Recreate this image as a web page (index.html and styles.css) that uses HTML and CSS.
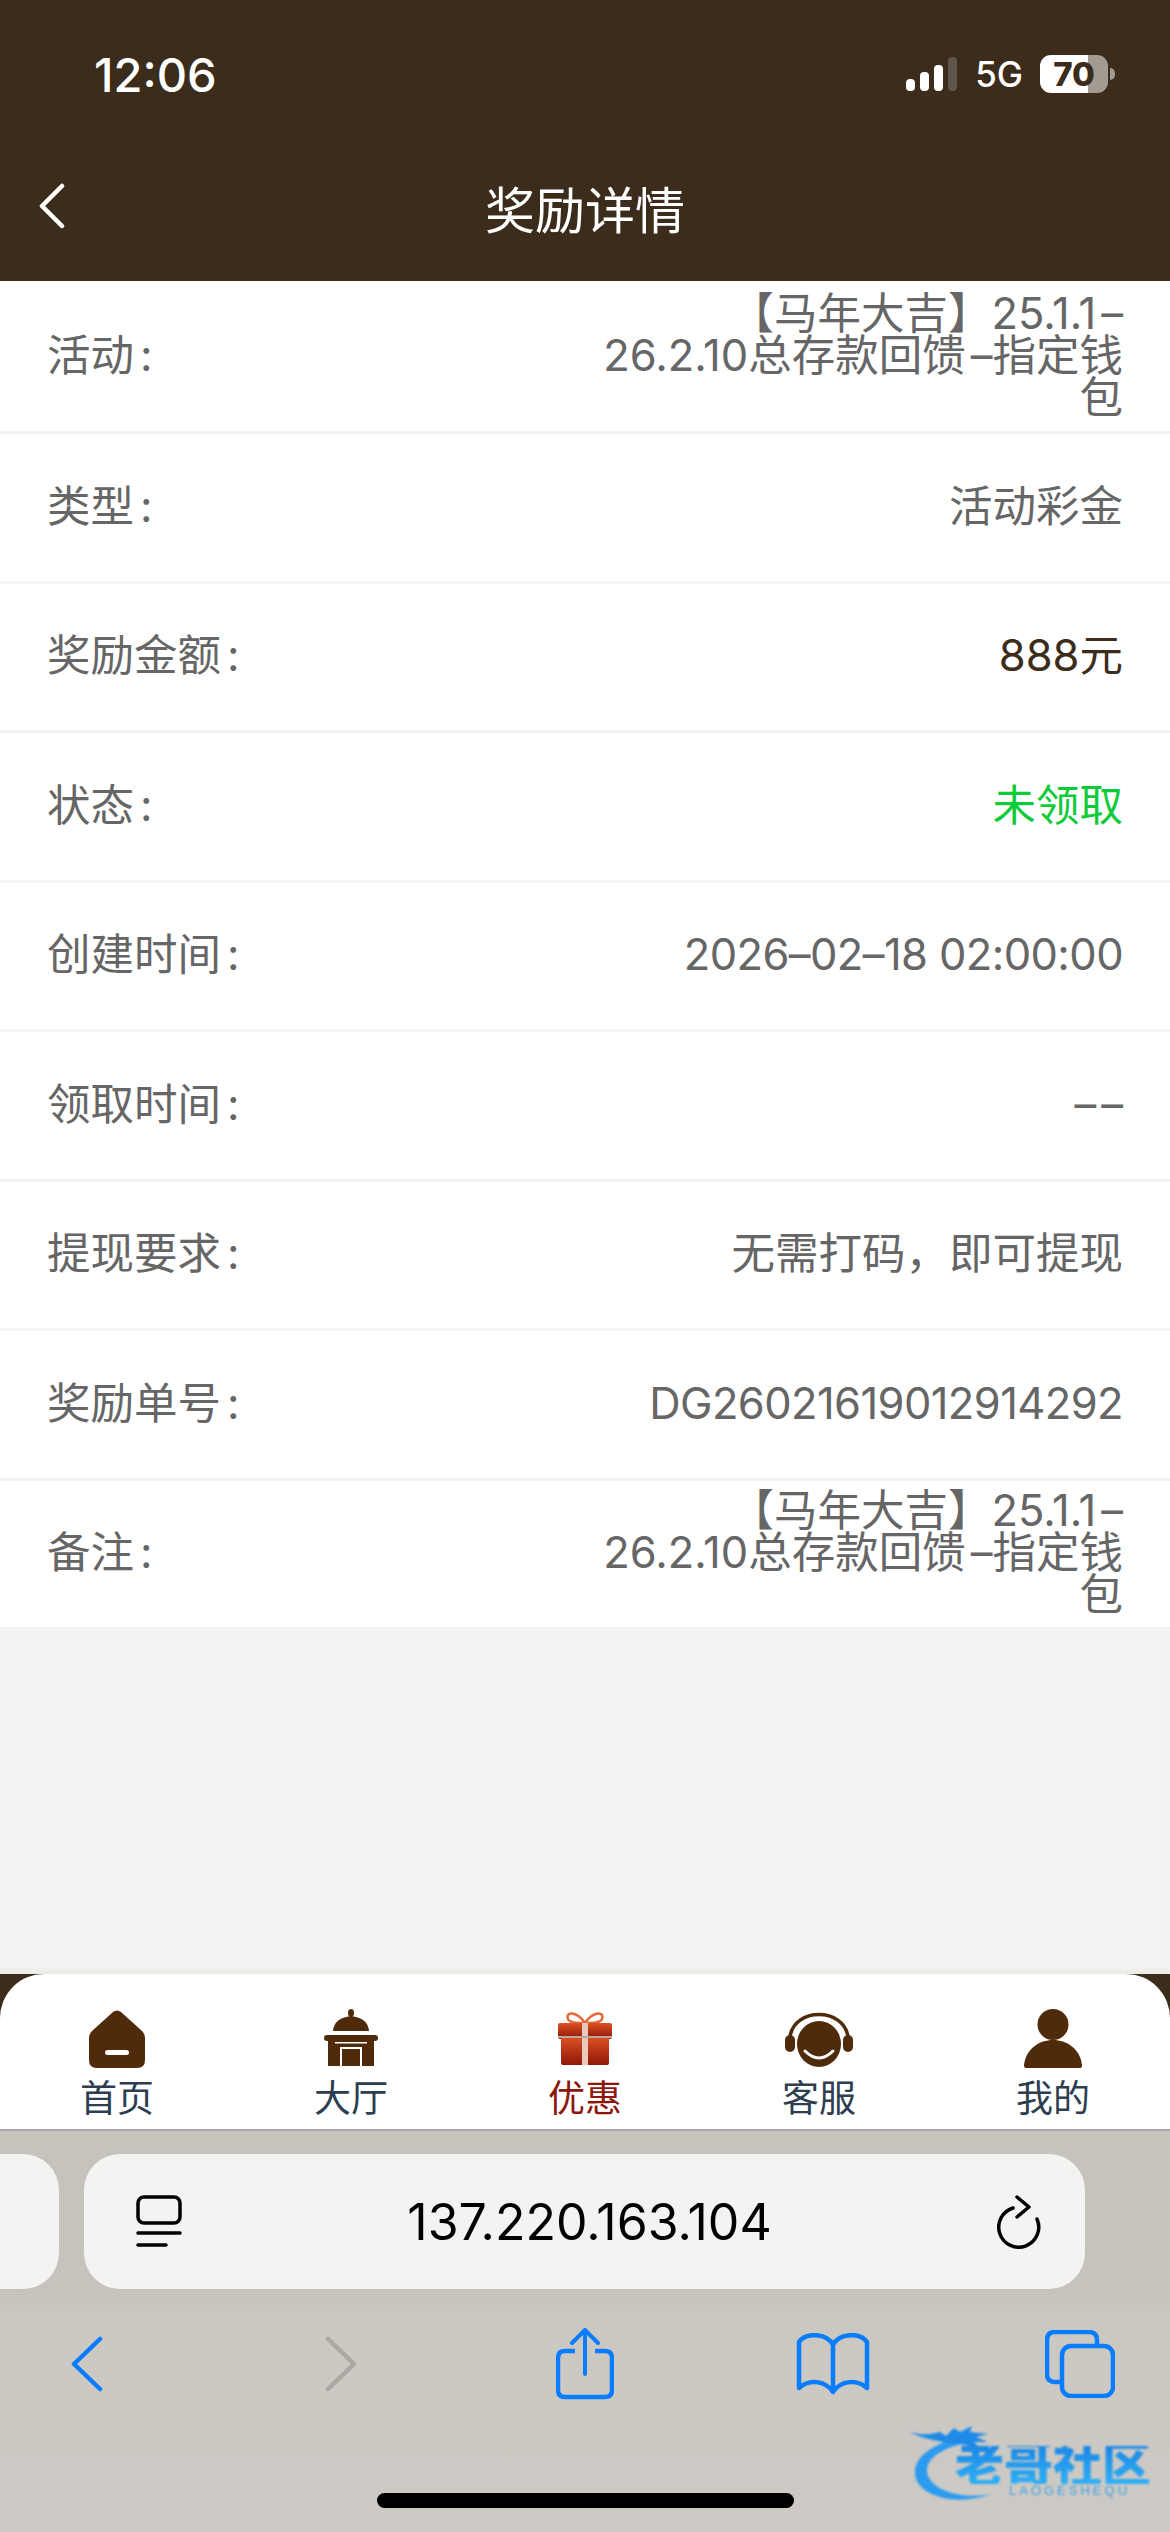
FILE: index.html
```html
<!DOCTYPE html>
<html>

<head>
    <meta http-equiv="Content-Type" content="text/html; charset=utf-8" />
    <title>奖励详情</title>
    <link rel="stylesheet" href="styles.css">
</head>

<body>
    <div id="page">
        <div id="header">
            <div id="statusBar">
                <span id="time">12:06</span>
                <div id="statusIcons">
                    <svg class="signal" width="52" height="34" viewBox="0 0 52 34">
                        <rect x="0" y="22" width="9" height="12" rx="4" fill="#fff" />
                        <rect x="14" y="15" width="9" height="19" rx="4" fill="#fff" />
                        <rect x="28" y="8" width="9" height="26" rx="4" fill="#fff" />
                        <rect x="42" y="0" width="9" height="34" rx="4" fill="#5f5549" />
                    </svg>
                    <span id="network">5G</span>
                    <span id="battery">70</span>
                    <span id="batteryNub"></span>
                </div>
            </div>
            <div id="titleBar">
                <svg class="backIcon" width="30" height="46" viewBox="0 0 30 46">
                    <path d="M25 3 L5 23 L25 43" fill="none" stroke="#fff" stroke-width="4.5" stroke-linecap="round" stroke-linejoin="round" />
                </svg>
                <h1 id="title">奖励详情</h1>
            </div>
        </div>

        <div id="main">
            <div class="row">
                <span class="label">活动<span class="colon">:</span></span>
                <span class="value">【马年大吉】25.1.1<span class="dash">–</span><br>26.2.10总存款回馈<span class="dash">–</span>指定钱<br>包</span>
            </div>
            <div class="row">
                <span class="label">类型<span class="colon">:</span></span>
                <span class="value">活动彩金</span>
            </div>
            <div class="row">
                <span class="label">奖励金额<span class="colon">:</span></span>
                <span class="value dark">888元</span>
            </div>
            <div class="row">
                <span class="label">状态<span class="colon">:</span></span>
                <span class="value green">未领取</span>
            </div>
            <div class="row">
                <span class="label">创建时间<span class="colon">:</span></span>
                <span class="value num">2026–02–18 02:00:00</span>
            </div>
            <div class="row">
                <span class="label">领取时间<span class="colon">:</span></span>
                <span class="value"><span class="dash">–</span><span class="dash">–</span></span>
            </div>
            <div class="row">
                <span class="label">提现要求<span class="colon">:</span></span>
                <span class="value">无需打码&#65292;即可提现</span>
            </div>
            <div class="row">
                <span class="label">奖励单号<span class="colon">:</span></span>
                <span class="value num">DG26021619012914292</span>
            </div>
            <div class="row">
                <span class="label">备注<span class="colon">:</span></span>
                <span class="value">【马年大吉】25.1.1<span class="dash">–</span><br>26.2.10总存款回馈<span class="dash">–</span>指定钱<br>包</span>
            </div>
        </div>

        <div id="navWrap">
            <div id="nav">
                <div class="navItem">
                    <svg width="60" height="60" viewBox="0 0 60 60">
                        <path d="M26 3 Q30 0 34 3 L55 22 Q58 25 58 29 L58 51 Q58 59 50 59 L10 59 Q2 59 2 51 L2 29 Q2 25 5 22 Z" fill="#4f2b0b" />
                        <rect x="18" y="41" width="24" height="5" rx="2.5" fill="#fff" />
                    </svg>
                    <span>首页</span>
                </div>
                <div class="navItem">
                    <svg width="60" height="60" viewBox="0 0 60 60">
                        <ellipse cx="30" cy="4" rx="3" ry="4" fill="#4f2b0b" />
                        <path d="M12 22 Q13 9 30 7 Q47 9 48 22 Z" fill="#4f2b0b" />
                        <rect x="3" y="26" width="54" height="6" rx="3" fill="#4f2b0b" />
                        <rect x="7" y="30" width="46" height="27" fill="#4f2b0b" />
                        <rect x="14" y="33" width="32" height="1.5" fill="#fff" />
                        <path d="M20 57 L20 39 L40 39 L40 57" fill="none" stroke="#fff" stroke-width="2" />
                    </svg>
                    <span>大厅</span>
                </div>
                <div class="navItem active">
                    <svg width="60" height="60" viewBox="0 0 60 60">
                        <defs>
                            <linearGradient id="giftGrad" x1="0" y1="0" x2="0" y2="1">
                                <stop offset="0" stop-color="#dc5222" />
                                <stop offset="1" stop-color="#8f1608" />
                            </linearGradient>
                        </defs>
                        <path d="M30 14 C22 2 10 2 13 10 C14 14 22 14 30 14 C38 14 46 14 47 10 C50 2 38 2 30 14 Z" fill="none" stroke="#e8683a" stroke-width="2.5" />
                        <rect x="3" y="14" width="54" height="16" rx="2" fill="url(#giftGrad)" />
                        <rect x="6" y="28" width="48" height="28" rx="2" fill="url(#giftGrad)" />
                        <rect x="27" y="14" width="6" height="42" fill="#e9c9bb" />
                        <rect x="3" y="27" width="54" height="2" fill="#b9a8a0" />
                    </svg>
                    <span>优惠</span>
                </div>
                <div class="navItem">
                    <svg width="70" height="60" viewBox="0 0 70 60">
                        <path d="M6 28 C10 -2 60 -2 64 28" fill="none" stroke="#4f2b0b" stroke-width="3.5" />
                        <rect x="1" y="26" width="10" height="17" rx="5" fill="#4f2b0b" />
                        <rect x="59" y="26" width="10" height="17" rx="5" fill="#4f2b0b" />
                        <ellipse cx="35" cy="35" rx="22" ry="23" fill="#4f2b0b" />
                        <path d="M21 42 Q35 56 49 42" fill="none" stroke="#fff" stroke-width="3" stroke-linecap="round" />
                    </svg>
                    <span>客服</span>
                </div>
                <div class="navItem">
                    <svg width="60" height="60" viewBox="0 0 62 62">
                        <ellipse cx="31" cy="16" rx="16" ry="16" fill="#4f2b0b" />
                        <path d="M1 58 C3 41 17 32 31 32 C45 32 59 41 61 58 Q61 61 58 61 L4 61 Q1 61 1 58 Z" fill="#4f2b0b" />
                    </svg>
                    <span>我的</span>
                </div>
            </div>
        </div>

        <div id="toolbar">
            <div id="urlRow">
                <div id="prevTab"></div>
                <div id="urlBar">
                    <svg width="46" height="54" viewBox="0 0 46 54">
                        <rect x="2" y="2" width="42" height="26" rx="6" fill="none" stroke="#000" stroke-width="3.5" />
                        <path d="M2 38 L44 38 M2 50 L30 50" fill="none" stroke="#000" stroke-width="3.5" stroke-linecap="round" />
                    </svg>
                    <span id="url">137.220.163.104</span>
                    <svg width="46" height="54" viewBox="0 0 46 54">
                        <path d="M16 13 A20 20 0 1 0 40 24" fill="none" stroke="#000" stroke-width="3.5" stroke-linecap="round" />
                        <path d="M20 2 L32 12 L20 22" fill="none" stroke="#000" stroke-width="3.5" stroke-linecap="round" stroke-linejoin="round" />
                    </svg>
                </div>
            </div>
            <div id="tools">
                <svg width="34" height="56" viewBox="0 0 34 56">
                    <path d="M30 3 L4 28 L30 53" fill="none" stroke="#0a7cff" stroke-width="4.5" stroke-linecap="round" stroke-linejoin="round" />
                </svg>
                <svg width="34" height="56" viewBox="0 0 34 56">
                    <path d="M4 3 L30 28 L4 53" fill="none" stroke="#aca9a4" stroke-width="4.5" stroke-linecap="round" stroke-linejoin="round" />
                </svg>
                <svg width="58" height="72" viewBox="0 0 58 72">
                    <path d="M19 23 L9 23 Q2 23 2 30 L2 62 Q2 69 9 69 L49 69 Q56 69 56 62 L56 30 Q56 23 49 23 L39 23" fill="none" stroke="#0a7cff" stroke-width="4.5" />
                    <path d="M29 2 L29 46 M16 15 L29 2 L42 15" fill="none" stroke="#0a7cff" stroke-width="4" stroke-linecap="round" stroke-linejoin="round" />
                </svg>
                <svg width="74" height="62" viewBox="0 0 74 62">
                    <path d="M37 12 C31 0 10 -1 3 9 L3 55 C13 46 29 47 37 59 C45 47 61 46 71 55 L71 9 C64 -1 43 0 37 12 Z M37 12 L37 59" fill="none" stroke="#0a7cff" stroke-width="4.5" stroke-linejoin="round" />
                </svg>
                <svg width="70" height="68" viewBox="0 0 70 68">
                    <path d="M52 14 L52 10 Q52 2 44 2 L10 2 Q2 2 2 10 L2 44 Q2 52 10 52 L16 52" fill="none" stroke="#0a7cff" stroke-width="4.5" />
                    <rect x="17" y="16" width="51" height="50" rx="9" fill="none" stroke="#0a7cff" stroke-width="4.5" />
                </svg>
            </div>
            <div id="homeBar"></div>
        </div>

        <div id="watermark">
            <svg width="110" height="82" viewBox="0 0 110 82">
                <path d="M42 17 C16 26 4 38 5 52 C6 72 42 86 82 72 C50 78 20 68 17 50 C16 38 28 28 52 22 Z" fill="#2b9bf0" />
                <path d="M0 10 C14 14 22 12 30 10 L36 14 L44 6 L50 10 L62 4 L60 10 L78 12 L66 15 L78 20 L64 20 L70 26 L50 22 C34 20 14 18 0 10 Z" fill="#1d8ae8" />
            </svg>
            <div id="wmText">老哥社区</div>
            <div id="wmSub">LAOGESHEQU</div>
        </div>
    </div>
</body>

</html>
```

FILE: styles.css
```css
* {
    margin: 0;
    padding: 0;
    box-sizing: border-box;
}

body {
    width: 1170px;
    height: 2532px;
    overflow: hidden;
    font-family: Inter, "Noto Sans CJK SC", sans-serif;
}

#page {
    position: relative;
    display: flex;
    flex-direction: column;
    width: 1170px;
    height: 2532px;
    background-color: #f3f3f3;
}

#header {
    height: 281px;
    background-color: #3c2c1b;
    color: #fff;
}

#statusBar {
    display: flex;
    align-items: center;
    justify-content: space-between;
    height: 148px;
    padding: 0 55px 0 94px;
}

#time {
    font-size: 47px;
    font-weight: 500;
}

#statusIcons {
    display: flex;
    align-items: center;
}

#network {
    margin: 0 17px;
    font-size: 35px;
    font-weight: 500;
}

#battery {
    width: 68px;
    height: 38px;
    border-radius: 11px;
    background: linear-gradient(90deg, #fff 70%, #a29b92 70%);
    color: #3c2c1b;
    font-size: 33px;
    font-weight: 800;
    line-height: 38px;
    text-align: center;
}

#batteryNub {
    width: 5px;
    height: 12px;
    margin-left: 2px;
    border-radius: 0 6px 6px 0;
    background-color: #a29b92;
}

#titleBar {
    display: flex;
    align-items: center;
    justify-content: center;
    position: relative;
    height: 124px;
    padding-bottom: 6px;
}

.backIcon {
    position: absolute;
    left: 37px;
    top: 35px;
}

#title {
    font-size: 50px;
    font-weight: 400;
}

#main {
    flex: 1;
}

.row {
    display: flex;
    align-items: center;
    justify-content: space-between;
    height: 149.5px;
    padding: 0 47px 3px 47px;
    background-color: #fff;
    border-bottom: 3px solid #f3f3f3;
    font-size: 43.5px;
    line-height: 42px;
    color: #666;
}

.row:first-child {
    height: 153px;
}

.row:last-child {
    height: 146.5px;
    border-bottom: none;
}

.colon {
    margin-left: 6px;
}

.value {
    max-width: 545px;
    text-align: right;
}

.num {
    letter-spacing: -0.6px;
}

.dash {
    padding-left: 5px;
}

.dark {
    color: #3c2c1b;
}

.green {
    color: #0ecb3a;
}

#navWrap {
    background-color: #3c2c1b;
    box-shadow: 0 -3px 6px rgba(205, 205, 170, 0.25);
}

#nav {
    display: grid;
    grid-template-columns: repeat(5, 1fr);
    height: 157px;
    padding-top: 35px;
    border-radius: 44px 44px 0 0;
    border-bottom: 2px solid #a8a6a2;
    background-color: #fff;
}

.navItem {
    display: flex;
    flex-direction: column;
    align-items: center;
    font-size: 37px;
    line-height: 44px;
    color: #2c3e50;
}

.navItem span {
    margin-top: 8px;
}

.navItem.active {
    color: #8c180c;
}

#toolbar {
    height: 401px;
    padding-top: 23px;
    background: linear-gradient(180deg, #c6c3bd 0, #c6c3bd 160px, #cbc8c2 190px, #cdcac5 100%);
}

#urlRow {
    display: flex;
    gap: 25px;
}

#prevTab {
    width: 59px;
    height: 135px;
    border-radius: 0 36px 36px 0;
    background-color: #f3f3f1;
}

#urlBar {
    display: flex;
    align-items: center;
    justify-content: space-between;
    width: 1001px;
    height: 135px;
    padding: 0 42px 0 52px;
    border-radius: 36px;
    background-color: #f3f3f1;
}

#url {
    font-size: 50px;
    color: #000;
}

#tools {
    display: grid;
    grid-template-columns: 174px 334px 154px 342px 152px;
    align-items: center;
    justify-items: center;
    height: 72px;
    margin-top: 39px;
}

#homeBar {
    width: 417px;
    height: 15px;
    margin: 93px 0 0 377px;
    border-radius: 8px;
    background-color: #000;
}

#watermark {
    position: absolute;
    left: 910px;
    top: 2422px;
    width: 244px;
    height: 82px;
    filter: blur(0.8px);
}

#wmText {
    position: absolute;
    left: 45px;
    top: 24px;
    font-size: 49px;
    font-weight: 900;
    line-height: 38px;
    background: linear-gradient(180deg, #1a87e6, #2fb0f5);
    -webkit-background-clip: text;
    background-clip: text;
    color: transparent;
    white-space: nowrap;
}

#wmSub {
    position: absolute;
    left: 99px;
    top: 62px;
    font-family: "Liberation Sans", sans-serif;
    font-size: 13px;
    line-height: 14px;
    letter-spacing: 3px;
    color: #3a9fe6;
    white-space: nowrap;
}
```
